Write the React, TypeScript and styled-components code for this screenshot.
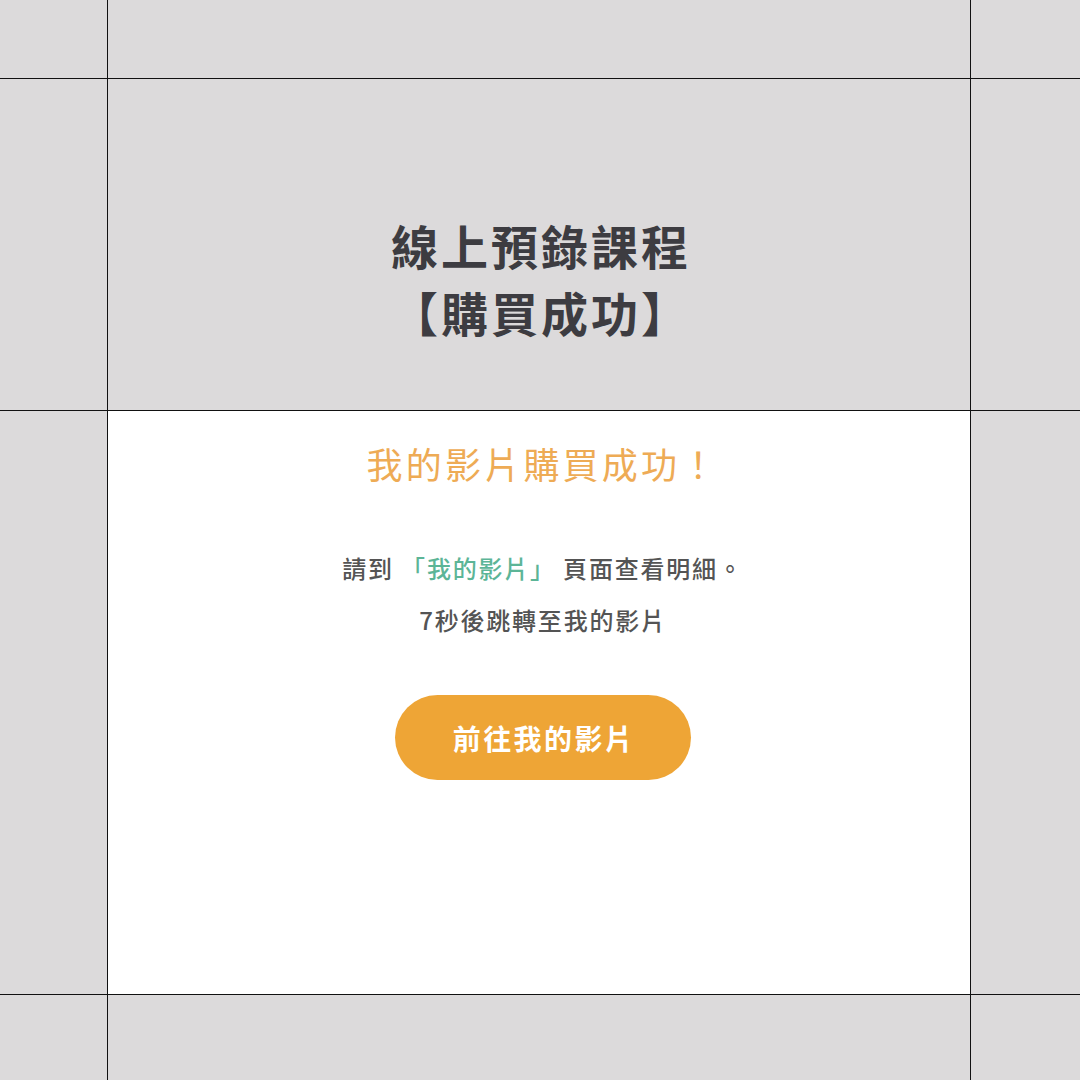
import React from 'react';
import styled, { createGlobalStyle } from 'styled-components';

const GlobalStyle = createGlobalStyle`
  html, body {
    margin: 0;
    padding: 0;
    background: #dcdadb;
  }
  body {
    font-family: 'Noto Sans CJK TC', 'Noto Sans', sans-serif;
  }
`;

const Grid = styled.div`
  display: grid;
  grid-template-columns: 107px 862px 1fr;
  grid-template-rows: 78px 331px 583px 1fr;
  gap: 1px;
  width: 1080px;
  height: 1080px;
  background: #111;
`;

const Cell = styled.div<{ $white?: boolean }>`
  background: ${(p) => (p.$white ? '#ffffff' : '#dcdadb')};
  min-width: 0;
  min-height: 0;
`;

const TitleCell = styled(Cell)`
  display: flex;
  flex-direction: column;
  align-items: center;
  padding-top: 132px;
  padding-left: 4px;
  box-sizing: border-box;
`;

const Title = styled.h1`
  margin: 0;
  font-size: 47px;
  line-height: 67px;
  font-weight: 700;
  color: #3d3c41;
  text-align: center;
  letter-spacing: 3px;
`;

const ContentCell = styled(Cell)`
  display: flex;
  flex-direction: column;
  align-items: center;
  padding-top: 31px;
  padding-left: 8px;
  box-sizing: border-box;
`;

const Heading = styled.h2`
  margin: 0 0 57px;
  font-size: 36px;
  line-height: 43px;
  font-weight: 400;
  color: #eeab55;
  letter-spacing: 3.2px;
`;

const Line = styled.p`
  margin: 0;
  font-size: 24px;
  line-height: 52px;
  font-weight: 500;
  color: #545454;
  letter-spacing: 1.8px;
`;

const Link = styled.span`
  color: #5cb597;
`;

const GoButton = styled.button`
  margin-top: 49px;
  width: 296px;
  height: 85px;
  padding: 0 0 0 2px;
  border: none;
  border-radius: 43px;
  background: #eea536;
  color: #ffffff;
  font-family: inherit;
  font-size: 28px;
  font-weight: 700;
  letter-spacing: 2.4px;
  cursor: pointer;
`;

const App: React.FC = () => {
  return (
    <>
      <GlobalStyle />
      <Grid>
        <Cell />
        <Cell />
        <Cell />

        <Cell />
        <TitleCell>
          <Title>
            線上預錄課程
            <br />
            【購買成功】
          </Title>
        </TitleCell>
        <Cell />

        <Cell />
        <ContentCell $white>
          <Heading>我的影片購買成功！</Heading>
          <Line>
            請到 <Link>「我的影片」</Link> 頁面查看明細。
          </Line>
          <Line>7秒後跳轉至我的影片</Line>
          <GoButton type="button">前往我的影片</GoButton>
        </ContentCell>
        <Cell />

        <Cell />
        <Cell />
        <Cell />
      </Grid>
    </>
  );
};

export default App;
